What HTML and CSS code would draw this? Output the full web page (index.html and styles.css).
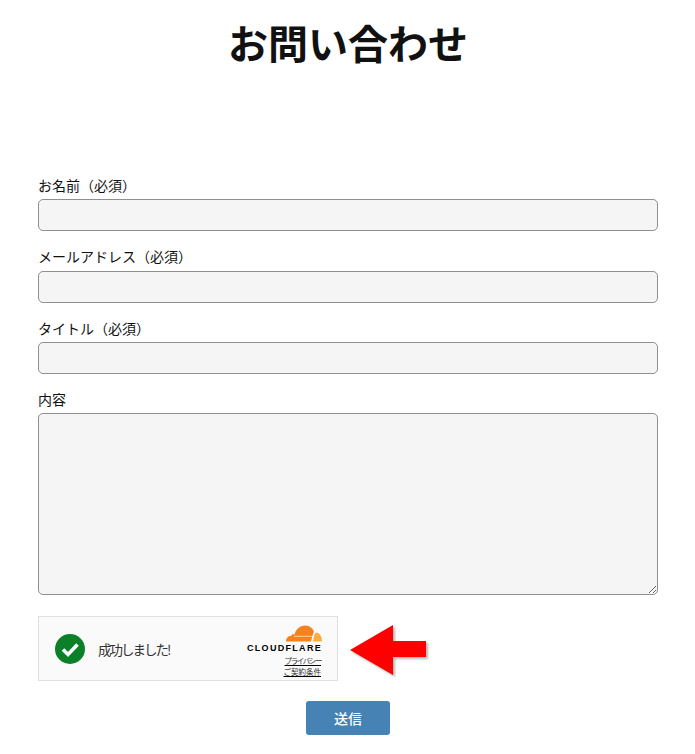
FILE: index.html
```html
<!DOCTYPE html>
<html lang="ja">
<head>
    <meta charset="UTF-8">
    <meta name="viewport" content="width=device-width, initial-scale=1.0">
    <title>お問い合わせ</title>
    <link rel="stylesheet" href="styles.css">
</head>
<body>

<h1>お問い合わせ</h1>

<form class="contact-form">
    <label for="your-name">お名前（必須）</label>
    <input type="text" id="your-name">

    <label for="your-email">メールアドレス（必須）</label>
    <input type="text" id="your-email">

    <label for="your-title">タイトル（必須）</label>
    <input type="text" id="your-title">

    <label for="your-message">内容</label>
    <textarea id="your-message"></textarea>

    <div class="captcha-row">
        <div class="captcha">
            <svg class="check-icon" width="30" height="30" viewBox="0 0 30 30">
                <circle cx="15" cy="15" r="15" fill="#0b8029"/>
                <path d="M8 15.500l5 5 9.500-10" fill="none" stroke="#fff" stroke-width="3.600"/>
            </svg>
            <span class="captcha-text">成功しました!</span>
            <div class="captcha-brand">
                <svg class="cloud" width="37" height="17" viewBox="0 0 37 17">
                    <path d="M1 16.500C1 13 3 11 6 11 6.500 9.500 8 9 9.500 9.500 11 4 15 .5 20 .5 25 .5 28 3.500 29 7 27.500 9 27 13 26 16.500z" fill="#f6821f"/>
                    <path d="M28 16.500C28.500 13 29.500 8.500 31 7.500 35 7.500 37 12 37 16.500z" fill="#fbad41"/>
                    <path d="M9 10.800h18l-.3 1.200H9z" fill="#fbc58a"/>
                </svg>
                <div class="cf-name">CLOUDFLARE</div>
                <a class="cf-link cf-privacy" href="#">プライバシー</a>
                <a class="cf-link" href="#">ご契約条件</a>
            </div>
        </div>
        <svg class="arrow" width="80" height="54" viewBox="0 0 80 54">
            <path class="arrow-head" d="M0 25L43 0v16h33v16H43v18z"/>
        </svg>
    </div>

    <div class="submit-row">
        <button type="button">送信</button>
    </div>
</form>

</body>
</html>
```

FILE: styles.css
```css
* {
    box-sizing: border-box;
}
body {
    margin: 0;
    padding: 0 37px 0 38px;
    background: white;
    color: #111;
    font-family: "Noto Sans CJK JP", "Noto Sans", sans-serif;
}
h1 {
    margin: 0;
    height: 175px;
    padding-top: 13px;
    font-size: 40px;
    line-height: 58px;
    font-weight: 700;
    text-align: center;
}
.contact-form label {
    display: block;
    margin-bottom: 4.200px;
    font-size: 14px;
    line-height: 20px;
}
.contact-form input,
.contact-form textarea {
    display: block;
    width: 100%;
    background: #f5f5f5;
    border: 1px solid #8f8f8f;
    border-radius: 5px;
}
.contact-form input {
    height: 32px;
    margin-bottom: 15.200px;
}
.contact-form textarea {
    height: 182px;
    margin-bottom: 21px;
}
.captcha-row {
    display: flex;
    align-items: center;
    gap: 12px;
}
.captcha {
    display: flex;
    align-items: center;
    flex: none;
    width: 300px;
    height: 65px;
    padding: 0 16px;
    background: #fafafa;
    border: 1px solid #e0e0e0;
}
.check-icon {
    flex: none;
}
.captcha-text {
    margin-left: 13px;
    font-size: 13.500px;
    letter-spacing: -2px;
    color: #333;
}
.captcha-brand {
    display: flex;
    flex-direction: column;
    align-items: flex-end;
    margin-left: auto;
    padding-top: 5px;
}
.cloud {
    display: block;
    margin-right: -1px;
}
.cf-name {
    margin-top: 2px;
    margin-right: -1px;
    font-family: "Liberation Sans", sans-serif;
    font-size: 9px;
    line-height: 9px;
    font-weight: 700;
    letter-spacing: 1.300px;
    color: #000;
}
.cf-link {
    font-size: 7.500px;
    line-height: 10.500px;
    color: #333;
    text-decoration: underline;
    text-decoration-color: #000;
}
.cf-privacy {
    margin-top: 3px;
    letter-spacing: -1.400px;
}
.arrow {
    flex: none;
    margin-top: 7px;
}
.arrow-head {
    fill: #ff0000;
    filter: drop-shadow(2px 2px 1px #b5b5b5);
}
.submit-row {
    display: flex;
    justify-content: center;
    margin-top: 20px;
}
button {
    width: 84px;
    height: 34px;
    background: #4682b4;
    color: white;
    border: none;
    border-radius: 3px;
    font-family: "Noto Sans CJK JP", sans-serif;
    font-size: 14px;
    font-weight: 500;
}
```
